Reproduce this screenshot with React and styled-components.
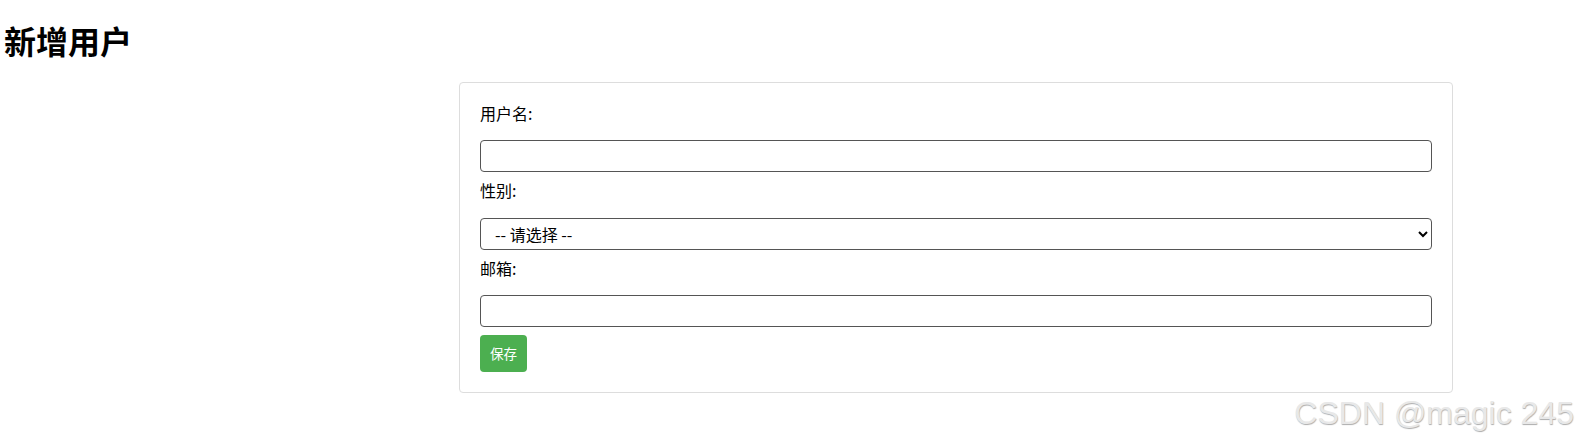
import React, { useState } from 'react';
import styled, { createGlobalStyle } from 'styled-components';

const GlobalStyle = createGlobalStyle`
  html, body {
    margin: 0;
    padding: 0;
    background: #fff;
  }
  body {
    font-family: "Microsoft YaHei", "Noto Sans CJK SC", "Noto Sans", sans-serif;
    color: #000;
  }
`;

const Page = styled.div`
  position: relative;
  width: 1579px;
  height: 440px;
  overflow: hidden;
`;

const Title = styled.h1`
  margin: 0;
  padding: 20px 0 0 4px;
  font-size: 32px;
  font-weight: 700;
  line-height: 40px;
`;

const Card = styled.form`
  box-sizing: border-box;
  width: 994px;
  margin: 22px 0 0 459px;
  padding: 20px;
  border: 1px solid #ddd;
  border-radius: 4px;
  background: #fff;
`;

const Label = styled.label`
  display: block;
  font-size: 16px;
  line-height: 21px;
  margin-bottom: 16.25px;
`;

const fieldStyles = `
  display: block;
  box-sizing: border-box;
  width: 100%;
  height: 32px;
  margin: 0 0 8px;
  border: 1px solid #555;
  border-radius: 4px;
  background: #fff;
  font-family: "Microsoft YaHei", "Noto Sans CJK SC", sans-serif;
  font-size: 16px;
  color: #000;
  outline: none;
`;

const Input = styled.input`
  ${fieldStyles}
  padding: 0 10px;
`;

const Select = styled.select`
  ${fieldStyles}
  padding: 0 6px 0 10px;
`;

const SaveButton = styled.button`
  display: block;
  box-sizing: border-box;
  height: 37px;
  padding: 0 10px;
  border: none;
  border-radius: 4px;
  background: #4caf50;
  color: #fff;
  font-family: "Microsoft YaHei", "Noto Sans CJK SC", sans-serif;
  font-size: 13.5px;
  cursor: pointer;
`;

const Watermark = styled.div`
  position: absolute;
  right: 5px;
  top: 395px;
  font-family: "Liberation Sans", Arial, sans-serif;
  font-size: 32px;
  line-height: 37px;
  color: #e8e8e8;
  text-shadow: 0.5px 0.5px 1px #acacac;
  pointer-events: none;
`;

export default function App() {
  const [form, setForm] = useState({ username: '', gender: '', email: '' });
  const update = key => e => setForm({ ...form, [key]: e.target.value });

  return (
    <Page>
      <GlobalStyle />
      <Title>新增用户</Title>
      <Card onSubmit={e => e.preventDefault()}>
        <Label htmlFor="username">用户名:</Label>
        <Input id="username" value={form.username} onChange={update('username')} />
        <Label htmlFor="gender">性别:</Label>
        <Select id="gender" value={form.gender} onChange={update('gender')}>
          <option value="">-- 请选择 --</option>
          <option value="male">男</option>
          <option value="female">女</option>
        </Select>
        <Label htmlFor="email">邮箱:</Label>
        <Input id="email" value={form.email} onChange={update('email')} />
        <SaveButton type="submit">保存</SaveButton>
      </Card>
      <Watermark>CSDN @magic 245</Watermark>
    </Page>
  );
}
